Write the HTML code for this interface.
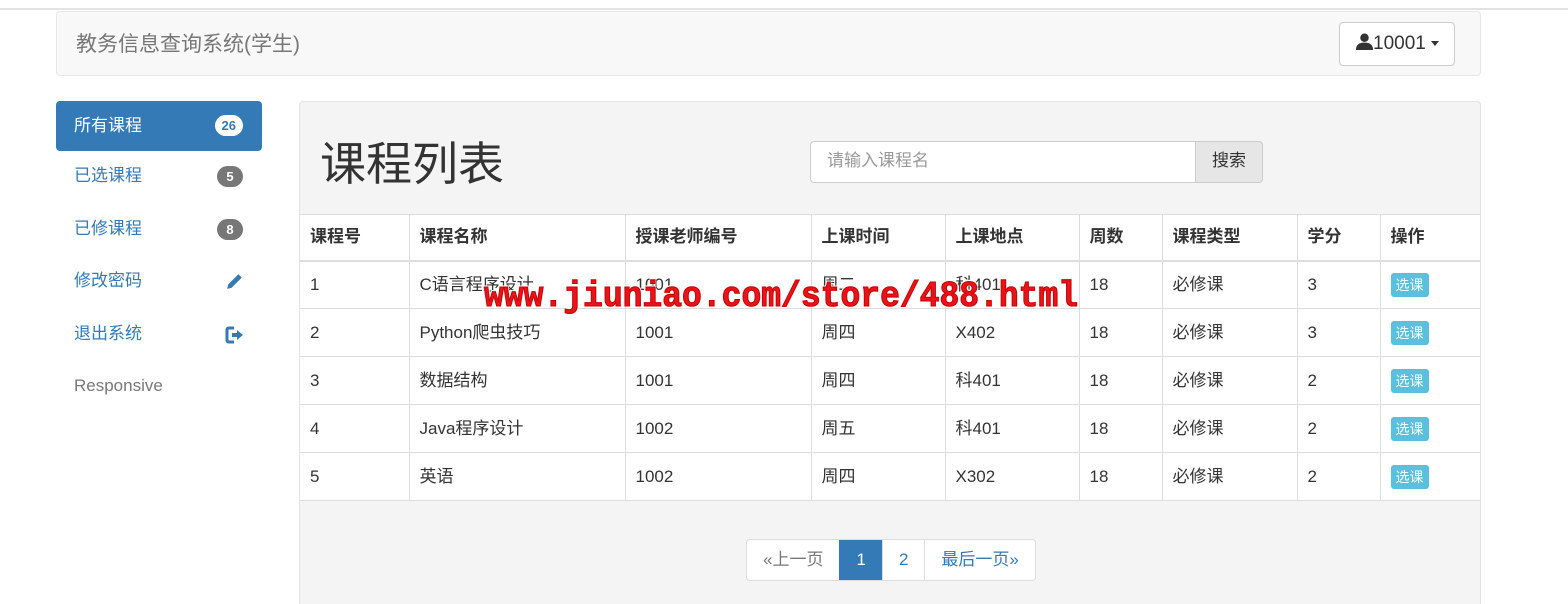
<!DOCTYPE html>
<html><head><meta charset="utf-8"><style>
*{box-sizing:border-box;margin:0;padding:0}
html,body{width:1568px;height:604px;overflow:hidden}
body{background:#fff;font-family:"Liberation Sans","Noto Sans CJK SC",sans-serif;font-size:17px;line-height:1.3;color:#333;position:relative}
.topline{position:absolute;left:0;top:8px;width:1568px;height:2px;background:#e2e2e2}
.nav{position:absolute;left:56px;top:11px;width:1425px;height:65px;background:#f8f8f8;border:1px solid #e7e7e7;border-radius:4px}
.brand{position:absolute;left:19px;top:19px;font-size:21px;color:#777}
.user{position:absolute;left:1282px;top:10px;width:116px;height:44px;background:#fff;border:1px solid #ccc;border-radius:4px;font-size:19px;color:#333;padding:9px 0 0 16px}
.side{position:absolute;left:56px;top:101px;width:206px}
.side div{height:52.5px;padding:14px 18px;color:#337ab7;position:relative;font-size:17px}
.side .act{background:#337ab7;color:#fff;border-radius:4px;height:50px}
.badge{position:absolute;right:19px;top:15px;background:#777;color:#fff;font-size:13px;font-weight:bold;border-radius:11px;min-width:26px;height:21px;text-align:center;line-height:21px;padding:0 7px}
.act .badge{background:#fff;color:#337ab7;right:19px;top:14px}
.panel{position:absolute;left:299px;top:101px;width:1182px;height:520px;background:#f4f4f4;border:1px solid #e3e3e3;border-radius:4px}
h1{position:absolute;left:20px;top:37px;font-size:46px;line-height:1.1;font-weight:normal;color:#333}
.inp{position:absolute;left:510px;top:39px;width:386px;height:42px;background:#fff;border:1px solid #ccc;border-radius:4px 0 0 4px;padding:8px 16px;color:#999;font-size:17px}
.btn{position:absolute;left:895px;top:39px;width:68px;height:42px;background:#e6e6e6;border:1px solid #ccc;border-radius:0 4px 4px 0;padding:8px 16px;font-size:17px;color:#333}
table{position:absolute;left:0;top:112px;width:1180px;border-collapse:collapse;background:#fff}
td,th{border:1px solid #ddd;height:48px;padding:0 10px;text-align:left;font-size:17px;line-height:20px;vertical-align:middle}
th{height:46px;font-weight:bold;border-bottom:2px solid #ddd}
tr td:first-child,tr th:first-child{border-left:none}
tr td:last-child,tr th:last-child{border-right:none}
.sel{display:inline-block;background:#5bc0de;color:#fff;font-size:14px;line-height:18px;padding:3px 5px;border-radius:3px}
.pag{position:absolute;left:446px;top:437px;height:42px;display:flex;border:1px solid #ddd;border-radius:4px;background:#fff;overflow:hidden}
.pag span{padding:9px 16px;font-size:17px;line-height:22px;color:#337ab7;border-left:1px solid #ddd}
.pag span:first-child{border-left:none;color:#777}
.pag .on{background:#337ab7;color:#fff;border-color:#337ab7}
.wm{position:absolute;left:484px;top:277px;font-family:"Liberation Mono",monospace;font-weight:bold;font-size:33px;line-height:40px;color:#e8141c;-webkit-text-stroke:1px #c00;text-shadow:1px 1px 0 #fff,-1px -1px 0 #fff,1px -1px 0 #fff,-1px 1px 0 #fff;white-space:nowrap;transform:scaleY(1.1);transform-origin:0 50%}
</style></head><body>
<div class="topline"></div>
<div class="nav"><div class="brand">教务信息查询系统(学生)</div>
<div class="user"><svg width="17" height="17" viewBox="0 0 16 16" style="vertical-align:-1px"><circle cx="8" cy="4.5" r="4" fill="#333"/><path d="M0 16 C0 10 4 9 8 9 C12 9 16 10 16 16Z" fill="#333"/></svg>10001 <span style="display:inline-block;border-top:5px solid #333;border-left:4px solid transparent;border-right:4px solid transparent;vertical-align:3px"></span></div></div>
<div class="side">
<div class="act">所有课程<span class="badge">26</span></div>
<div>已选课程<span class="badge">5</span></div>
<div>已修课程<span class="badge">8</span></div>
<div>修改密码<svg style="position:absolute;right:18px;top:16px" width="18" height="18" viewBox="0 0 16 16"><path d="M11 2 L14 5 L5 14 L1 15 L2 11Z" fill="#337ab7"/><path d="M12 1 L15 4" stroke="#fff" stroke-width="1"/></svg></div>
<div>退出系统<svg style="position:absolute;right:17px;top:17px" width="20" height="18" viewBox="0 0 20 18"><path d="M9 2 H4 Q2 2 2 4 V14 Q2 16 4 16 H9" fill="none" stroke="#337ab7" stroke-width="3"/><path d="M7 7 H12 V4 L18 9 L12 14 V11 H7Z" fill="#337ab7"/></svg></div>
<div style="color:#777">Responsive</div>
</div>
<div class="panel">
<h1>课程列表</h1>
<div class="inp">请输入课程名</div><div class="btn">搜索</div>
<table>
<tr><th style="width:109px">课程号</th><th style="width:216px">课程名称</th><th style="width:186px">授课老师编号</th><th style="width:134px">上课时间</th><th style="width:134px">上课地点</th><th style="width:83px">周数</th><th style="width:135px">课程类型</th><th style="width:83px">学分</th><th>操作</th></tr>
<tr><td>1</td><td>C语言程序设计</td><td>1001</td><td>周二</td><td>科401</td><td>18</td><td>必修课</td><td>3</td><td><span class="sel">选课</span></td></tr>
<tr><td>2</td><td>Python爬虫技巧</td><td>1001</td><td>周四</td><td>X402</td><td>18</td><td>必修课</td><td>3</td><td><span class="sel">选课</span></td></tr>
<tr><td>3</td><td>数据结构</td><td>1001</td><td>周四</td><td>科401</td><td>18</td><td>必修课</td><td>2</td><td><span class="sel">选课</span></td></tr>
<tr><td>4</td><td>Java程序设计</td><td>1002</td><td>周五</td><td>科401</td><td>18</td><td>必修课</td><td>2</td><td><span class="sel">选课</span></td></tr>
<tr><td>5</td><td>英语</td><td>1002</td><td>周四</td><td>X302</td><td>18</td><td>必修课</td><td>2</td><td><span class="sel">选课</span></td></tr>
</table>
<div class="pag"><span>«上一页</span><span class="on">1</span><span>2</span><span>最后一页»</span></div>
</div>
<div class="wm">www.jiuniao.com/store/488.html</div>
</body></html>
